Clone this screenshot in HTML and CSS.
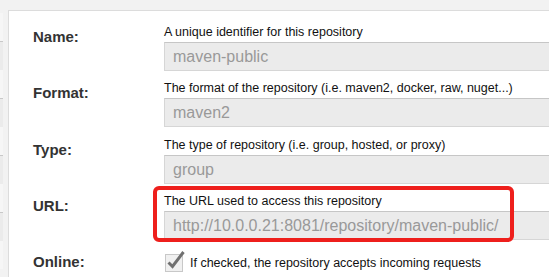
FILE: index.html
```html
<!DOCTYPE html>
<html lang="en">
<head>
    <meta charset="UTF-8">
    <meta name="viewport" content="width=device-width, initial-scale=1.0">
    <title>Repository settings</title>
    <link rel="stylesheet" href="styles.css">
</head>
<body>
    <div class="page">
        <div class="sidebar">
            <div class="side-row"></div>
            <div class="side-row dark"></div>
            <div class="side-row"></div>
            <div class="side-row dark"></div>
            <div class="side-row"></div>
            <div class="side-row dark"></div>
            <div class="side-row"></div>
            <div class="side-row dark"></div>
            <div class="side-row"></div>
        </div>
        <div class="gutter"></div>
        <div class="panel">
            <div class="row">
                <div class="label">Name:</div>
                <div class="field">
                    <div class="help">A unique identifier for this repository</div>
                    <div class="input">maven-public</div>
                </div>
            </div>
            <div class="row">
                <div class="label">Format:</div>
                <div class="field">
                    <div class="help">The format of the repository (i.e. maven2, docker, raw, nuget...)</div>
                    <div class="input">maven2</div>
                </div>
            </div>
            <div class="row">
                <div class="label">Type:</div>
                <div class="field">
                    <div class="help">The type of repository (i.e. group, hosted, or proxy)</div>
                    <div class="input">group</div>
                </div>
            </div>
            <div class="row">
                <div class="label">URL:</div>
                <div class="field">
                    <div class="help">The URL used to access this repository</div>
                    <div class="input">http://10.0.0.21:8081/repository/maven-public/</div>
                    <div class="highlight"></div>
                </div>
            </div>
            <div class="row">
                <div class="label">Online:</div>
                <div class="field check-field">
                    <svg class="checkbox" width="20" height="20" viewBox="0 0 20 20">
                        <rect x="0.5" y="1.5" width="17" height="17" fill="#f0f0f0" stroke="#c8c8c8"/>
                        <path d="M3.5 9.5 L7.5 13.5 L18.5 -1" fill="none" stroke="#707070" stroke-width="3"/>
                    </svg>
                    <span class="check-text">If checked, the repository accepts incoming requests</span>
                </div>
            </div>
        </div>
    </div>
</body>
</html>
```

FILE: styles.css
```css
html, body {
    margin: 0;
    height: 100%;
    overflow: hidden;
}
body {
    background-color: #f2f2f2;
    font-family: "Liberation Sans", Arial, sans-serif;
    color: #222;
}
.page {
    display: flex;
    height: 100%;
}
.sidebar {
    flex-shrink: 0;
    width: 3px;
    padding-top: 13px;
}
.side-row {
    height: 28px;
    background: #f6f6f6;
}
.side-row.dark {
    background: #ebebeb;
    border-top: 1px solid #c8c8c8;
    height: 28px;
}
.gutter {
    flex-shrink: 0;
    width: 5px;
}
.panel {
    flex: 1;
    min-width: 0;
    margin-top: 10px;
    background: white;
    border-top: 1px solid #dcdcdc;
    border-left: 1px solid #dcdcdc;
    padding: 13px 0 0 24px;
}
.row {
    display: grid;
    grid-template-columns: 131px 420px;
    height: 56.3px;
}
.label {
    font-weight: bold;
    font-size: 15px;
    line-height: 20px;
    padding-top: 3px;
    color: #333;
}
.field {
    position: relative;
}
.help {
    font-size: 12.5px;
    line-height: 16px;
    margin-bottom: 2px;
    color: #111;
    white-space: nowrap;
}
.input {
    box-sizing: border-box;
    height: 29px;
    line-height: 27px;
    padding: 0 8px;
    background: #ebebeb;
    border: 1px solid #d6d6d6;
    border-top-color: #c6c6c6;
    color: #999;
    font-size: 16px;
    white-space: nowrap;
}
.highlight {
    position: absolute;
    left: -11px;
    top: -7px;
    width: 361px;
    height: 56px;
    box-sizing: border-box;
    border: 4px solid #ee1f1c;
    border-radius: 6px;
}
.check-field {
    display: flex;
    align-items: center;
    gap: 5px;
    height: 20px;
    padding-top: 4px;
}
.checkbox {
    margin-left: 1px;
    overflow: visible;
}
.check-text {
    font-size: 12.5px;
    color: #111;
    white-space: nowrap;
}
```
